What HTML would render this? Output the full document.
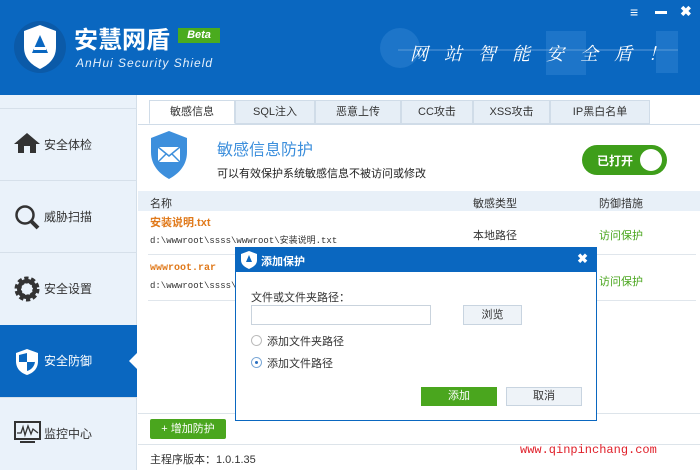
<!DOCTYPE html>
<html><head><meta charset="utf-8"><style>
*{margin:0;padding:0;box-sizing:border-box}
body{width:700px;height:470px;overflow:hidden;background:#fff;font-family:"Liberation Sans","Noto Sans CJK SC",sans-serif;font-size:11px;color:#333;position:relative}
.abs{position:absolute}
.hdr{left:0;top:0;width:700px;height:95px;background:#0a67c0}
.side{left:0;top:95px;width:137px;height:375px;background:#eaf2fa;border-right:1px solid #d4dfe9}
.si{position:absolute;left:0;width:137px;height:72px;border-top:1px solid #d6e0ea;font-size:12px;color:#333}
.si span{position:absolute;left:44px;top:27px}
.si svg{position:absolute;left:14px;top:23px}
.tab{position:absolute;top:100px;height:24px;background:#e6eef6;border:1px solid #d0dce8;font-size:11px;text-align:center;line-height:22px;color:#333}
.btn{position:absolute;border:1px solid #c8d4e0;background:#eef3f8;text-align:center;font-size:11px}
</style></head><body>
<div class="abs hdr">
 <svg class="abs" style="left:13px;top:20px" width="54" height="54" viewBox="0 0 54 54"><circle cx="27" cy="27" r="26" fill="#0b5aa8"/><path d="M27 5 L43 11 L43 27 C43 39 35 45 27 49 C19 45 11 39 11 27 L11 11 Z" fill="#fff"/><path d="M27 15 L35 33 H19 Z" fill="#0a67c0"/><rect x="21" y="27" width="12" height="3" fill="#fff"/></svg>
 <div class="abs" style="left:74px;top:27px;font-size:24px;line-height:28px;color:#fff;font-weight:bold">安慧网盾</div>
 <div class="abs" style="left:178px;top:28px;width:42px;height:15px;background:#4aab1e;color:#fff;font-size:11px;font-style:italic;text-align:center;line-height:15px;font-weight:bold">Beta</div>
 <div class="abs" style="left:76px;top:56px;font-size:12px;color:#e5f0fb;font-style:italic;letter-spacing:1px">AnHui Security Shield</div>
 <svg class="abs" style="left:378px;top:28px" width="300" height="50"><circle cx="22" cy="20" r="20" fill="#2a7fcf" opacity=".6"/><rect x="168" y="3" width="40" height="44" fill="#2a7fcf" opacity=".6"/><rect x="278" y="3" width="22" height="42" fill="#2a7fcf" opacity=".6"/><line x1="20" y1="22" x2="300" y2="22" stroke="#5c9ad8" stroke-width="1"/></svg>
 <div class="abs" style="left:410px;top:40px;font-size:18px;color:#fff;font-style:italic;letter-spacing:16px;font-family:'Noto Serif CJK SC',serif">网站智能安全盾！</div>
 <div class="abs" style="left:630px;top:4px;color:#fff;font-size:14px;font-weight:bold">≡</div>
 <div class="abs" style="left:655px;top:11px;width:12px;height:3px;background:#fff"></div>
 <div class="abs" style="left:680px;top:3px;color:#fff;font-size:14px;font-weight:bold">✖</div>
</div>
<div class="abs side">
 <div class="si" style="top:13px"><svg width="26" height="22"><path d="M13 1 L26 12 H22 V21 H16 V14 H10 V21 H4 V12 H0 Z" fill="#333"/></svg><span>安全体检</span></div>
 <div class="si" style="top:85px"><svg width="26" height="26"><circle cx="11" cy="11" r="8.5" fill="none" stroke="#333" stroke-width="2.5"/><path d="M17 17 L24 24" stroke="#333" stroke-width="4"/></svg><span>威胁扫描</span></div>
 <div class="si" style="top:157px"><svg width="26" height="26"><circle cx="13" cy="13" r="9" fill="none" stroke="#333" stroke-width="7" stroke-dasharray="3.5 2.2"/><circle cx="13" cy="13" r="8" fill="none" stroke="#333" stroke-width="4"/></svg><span>安全设置</span></div>
 <div class="si" style="top:230px;background:#0a67c0;color:#fff;border-top:none"><svg width="26" height="28"><path d="M13 1 L24 5 V13 C24 21 19 25 13 27 C7 25 2 21 2 13 V5 Z" fill="#fff"/><path d="M13 5 V14 H21 V13 C21 18 17 22 13 23 Z M13 14 H5 V7 L13 5Z" fill="#0a67c0"/></svg><span>安全防御</span></div>
 <div style="position:absolute;left:129px;top:257px;width:0;height:0;border-top:9px solid transparent;border-bottom:9px solid transparent;border-right:9px solid #fff"></div>
 <div class="si" style="top:302px"><svg width="28" height="24"><rect x="1" y="1" width="25" height="17" fill="none" stroke="#333" stroke-width="2"/><path d="M3 12 L7 12 L9 6 L11 14 L14 5 L17 13 L19 8 L24 12" fill="none" stroke="#333" stroke-width="1.3"/><rect x="6" y="20" width="15" height="2" fill="#333"/></svg><span>监控中心</span></div>
</div>
<div class="abs" style="left:138px;top:95px;width:562px;height:30px;background:#fff;border-bottom:1px solid #d0dce8"></div>
<div class="tab" style="left:149px;width:86px;background:#fff;border-bottom:1px solid #fff">敏感信息</div>
<div class="tab" style="left:235px;width:80px">SQL注入</div>
<div class="tab" style="left:315px;width:86px">恶意上传</div>
<div class="tab" style="left:401px;width:72px">CC攻击</div>
<div class="tab" style="left:473px;width:77px">XSS攻击</div>
<div class="tab" style="left:550px;width:100px">IP黑白名单</div>
<svg class="abs" style="left:150px;top:130px" width="38" height="50"><path d="M19 1 L37 8 V22 C37 36 28 44 19 49 C10 44 1 36 1 22 V8 Z" fill="#3d8fdc"/><rect x="8" y="17" width="22" height="15" fill="#fff"/><path d="M8 17 L19 26 L30 17 M8 32 L16 24 M30 32 L22 24" fill="none" stroke="#3d8fdc" stroke-width="1.5"/></svg>
<div class="abs" style="left:217px;top:136px;font-size:16px;color:#3d8fdc">敏感信息防护</div>
<div class="abs" style="left:217px;top:165px;font-size:11px;color:#222">可以有效保护系统敏感信息不被访问或修改</div>
<div class="abs" style="left:582px;top:145px;width:85px;height:30px;border-radius:15px;background:#3e9e1a"></div>
<div class="abs" style="left:597px;top:152px;color:#fff;font-size:12px;font-weight:bold">已打开</div>
<div class="abs" style="left:640px;top:149px;width:22px;height:22px;border-radius:11px;background:#fff"></div>
<div class="abs" style="left:138px;top:191px;width:562px;height:20px;background:#e8f0f8"></div>
<div class="abs" style="left:150px;top:195px">名称</div>
<div class="abs" style="left:473px;top:195px">敏感类型</div>
<div class="abs" style="left:599px;top:195px">防御措施</div>
<div class="abs" style="left:150px;top:214px;color:#e07a1c;font-weight:bold">安装说明.txt</div>
<div class="abs" style="left:150px;top:233px;font-size:9px;font-family:'Liberation Mono','Noto Sans CJK SC',monospace">d:\wwwroot\ssss\wwwroot\安装说明.txt</div>
<div class="abs" style="left:473px;top:227px;font-size:11px">本地路径</div>
<div class="abs" style="left:599px;top:227px;color:#4aa61e">访问保护</div>
<div class="abs" style="left:148px;top:254px;width:548px;height:1px;background:#e0e6ec"></div>
<div class="abs" style="left:150px;top:263px;color:#e07a1c;font-weight:bold;font-size:10px;font-family:'Liberation Mono',monospace">wwwroot.rar</div>
<div class="abs" style="left:150px;top:281px;font-size:9px;font-family:'Liberation Mono',monospace">d:\wwwroot\ssss\w</div>
<div class="abs" style="left:599px;top:273px;color:#4aa61e">访问保护</div>
<div class="abs" style="left:148px;top:300px;width:548px;height:1px;background:#e0e6ec"></div>
<div class="abs" style="left:138px;top:413px;width:562px;height:1px;background:#dde4ea"></div>
<div class="abs" style="left:150px;top:419px;width:76px;height:20px;background:#4aa61e;border-radius:2px;color:#fff;text-align:center;line-height:20px">+ 增加防护</div>
<div class="abs" style="left:138px;top:444px;width:562px;height:1px;background:#dde4ea"></div>
<div class="abs" style="left:150px;top:451px;font-size:11px">主程序版本：1.0.1.35</div>
<div class="abs" style="left:520px;top:443px;color:#e0202a;font-size:12px;font-family:'Liberation Mono',monospace">www.qinpinchang.com</div>
<div class="abs" style="left:235px;top:247px;width:362px;height:174px;border:1px solid #0a67c0;background:#fff">
 <div style="height:24px;background:#0a67c0;position:relative">
  <svg style="position:absolute;left:5px;top:3px" width="16" height="18"><path d="M8 0 L16 3 V9 C16 14 12 16 8 18 C4 16 0 14 0 9 V3 Z" fill="#fff"/><path d="M8 4 L11 11 H5Z" fill="#0a67c0"/></svg>
  <span style="position:absolute;left:25px;top:5px;color:#fff;font-weight:bold;font-size:11px">添加保护</span>
  <span style="position:absolute;right:8px;top:3px;color:#fff;font-weight:bold;font-size:13px">✖</span>
 </div>
 <div style="position:absolute;left:15px;top:41px;font-size:11px">文件或文件夹路径：</div>
 <div style="position:absolute;left:15px;top:57px;width:180px;height:20px;border:1px solid #c9d3dd"></div>
 <div class="btn" style="left:227px;top:57px;width:59px;height:20px;line-height:18px">浏览</div>
 <div style="position:absolute;left:15px;top:87px;width:11px;height:11px;border:1px solid #bbb;border-radius:50%"></div>
 <div style="position:absolute;left:31px;top:85px">添加文件夹路径</div>
 <div style="position:absolute;left:15px;top:109px;width:11px;height:11px;border:1px solid #7aa7d6;border-radius:50%"><div style="margin:3px;width:3px;height:3px;background:#2a6fc0;border-radius:50%"></div></div>
 <div style="position:absolute;left:31px;top:107px">添加文件路径</div>
 <div style="position:absolute;left:185px;top:139px;width:76px;height:19px;background:#4aa61e;color:#fff;text-align:center;line-height:19px">添加</div>
 <div class="btn" style="left:270px;top:139px;width:76px;height:19px;line-height:17px">取消</div>
</div>
</body></html>
